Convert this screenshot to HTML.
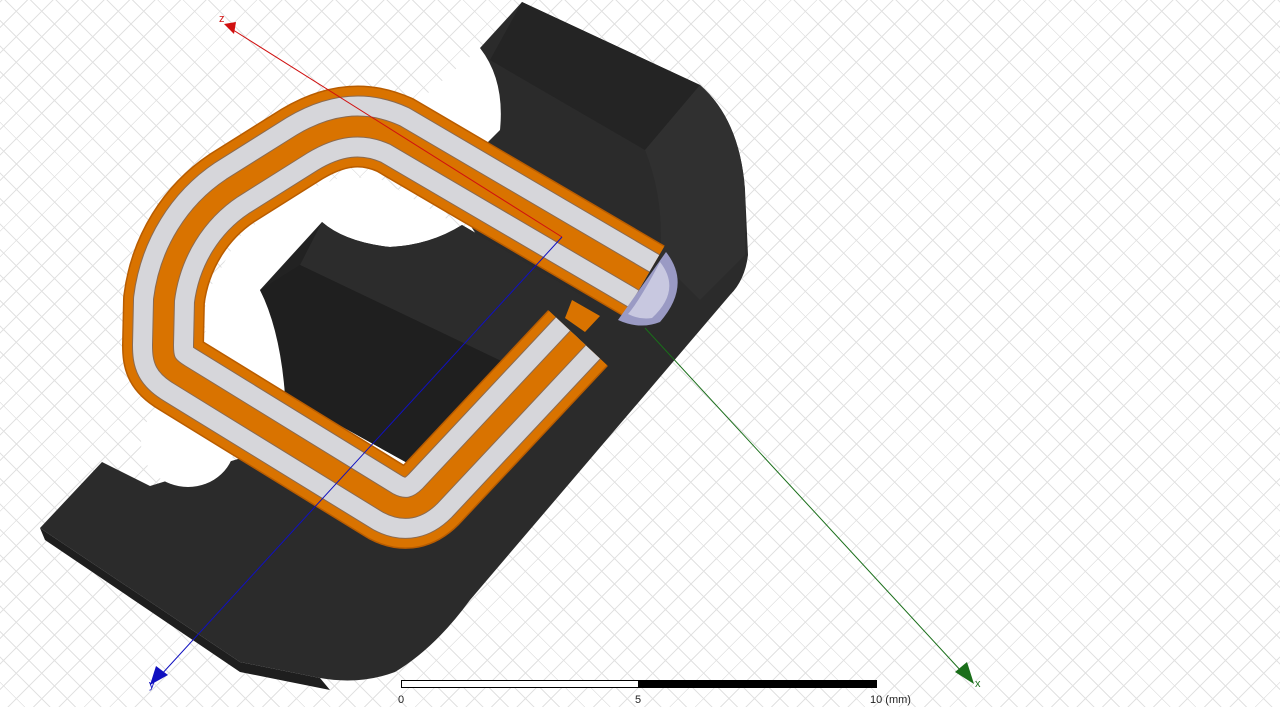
<!DOCTYPE html>
<html><head><meta charset="utf-8"><style>
html,body{margin:0;padding:0;width:1280px;height:707px;overflow:hidden;background:#fff;}
#bg{position:absolute;left:0;top:0;width:1280px;height:707px;
background:
repeating-linear-gradient(45deg,transparent 0 17px,#e2e2e2 17px 18px),
repeating-linear-gradient(-45deg,transparent 0 17px,#e2e2e2 17px 18px),#fff;}
svg{position:absolute;left:0;top:0;}
.t{font-family:"Liberation Sans",sans-serif;font-size:11px;fill:#222;}
</style></head><body>
<div id="bg"></div>
<svg width="1280" height="707" viewBox="0 0 1280 707">
<defs>
<path id="c" d="M644,281 L395,135 C362,120 332,126 302,144 L232,188 C196,212 170,252 164,300 L163,345 C163,360 165,366 180,375 L388,503 C405,512 418,508 430,496 L578,338"/>
</defs>
<!-- core -->
<path d="M480,48 L522,2 L700,85 Q740,120 745,190 L748,255 Q745,280 730,295 L470,600 Q435,648 395,672 Q360,685 320,678 L240,662 L40,528 L102,462 L150,486 L560,360 L470,225 L480,48 Z" fill="#2b2b2b"/>
<path d="M40,528 L240,662 L320,678 L330,690 L240,672 L45,540 Z" fill="#1e1e1e"/>
<path d="M522,2 L700,85 L645,150 L490,60 Z" fill="#242424"/>
<path d="M645,150 Q665,200 660,260 L700,300 L745,255 L745,190 Q740,120 700,85 Z" fill="#303030"/>
<!-- upper white hole -->
<path d="M480,48 Q505,80 500,130 L470,160 L420,100 Z" fill="#fff"/>
<ellipse cx="188" cy="443" rx="47" ry="44" fill="#fff"/>
<!-- coil opening -->
<path d="M205,330 L206,295 L238,238 L290,196 L345,176 L382,180 L545,278 L552,312 L420,466 L404,466 L214,348 Z" fill="#fff"/>
<!-- central leg -->
<path d="M260,290 L322,222 Q345,242 390,247 Q430,245 462,225 L590,300 L420,470 L285,395 Q280,330 260,290 Z" fill="#222"/>
<path d="M322,222 Q345,242 390,247 Q430,245 462,225 L590,300 L520,370 L300,265 Z" fill="#2c2c2c"/>
<path d="M260,290 L300,265 L520,370 L420,470 L285,395 Q282,330 260,290Z" fill="#1f1f1f"/>
<!-- coil -->
<g fill="none" stroke-linejoin="round">
<use href="#c" stroke="#b85c00" stroke-width="82"/>
<use href="#c" stroke="#d97300" stroke-width="79"/>
<use href="#c" stroke="#8a6a50" stroke-width="62"/>
<use href="#c" stroke="#d6d6da" stroke-width="60"/>
<use href="#c" stroke="#8a6a50" stroke-width="22"/>
<use href="#c" stroke="#d97300" stroke-width="20"/>
</g>
<!-- connector and end cap -->
<path d="M572,300 L600,316 L585,332 L565,318 Z" fill="#d97300"/>
<path d="M666,252 Q692,285 660,322 Q640,330 618,320 Z" fill="#9a9ac4"/>
<path d="M660,262 Q682,290 652,318 Q640,320 628,314 Q640,300 660,262Z" fill="#c8c8e0"/>
<!-- axes -->
<line x1="230" y1="28" x2="562" y2="237" stroke="#d01010" stroke-width="1"/>
<path d="M224,24 L236,22 L234,34 Z" fill="#d01010"/>
<text x="219" y="22" font-family="Liberation Sans" font-size="11" fill="#d01010">z</text>
<line x1="562" y1="237" x2="160" y2="676" stroke="#1010c0" stroke-width="1"/>
<path d="M150,685 L156,666 L168,675 Z" fill="#1010c0"/>
<text x="149" y="688" font-family="Liberation Sans" font-size="11" fill="#1010c0">y</text>
<line x1="645" y1="328" x2="962" y2="672" stroke="#1a6e1a" stroke-width="1"/>
<path d="M974,684 L955,672 L967,662 Z" fill="#1a6e1a"/>
<text x="975" y="687" font-family="Liberation Sans" font-size="11" fill="#1a6e1a">x</text>
<!-- scale bar -->
<rect x="401.5" y="680.5" width="237" height="7" fill="#fff" stroke="#000"/>
<rect x="639" y="680" width="238" height="8" fill="#000"/>
<text class="t" x="398" y="703">0</text>
<text class="t" x="635" y="703">5</text>
<text class="t" x="870" y="703">10 (mm)</text>
</svg>
</body></html>
